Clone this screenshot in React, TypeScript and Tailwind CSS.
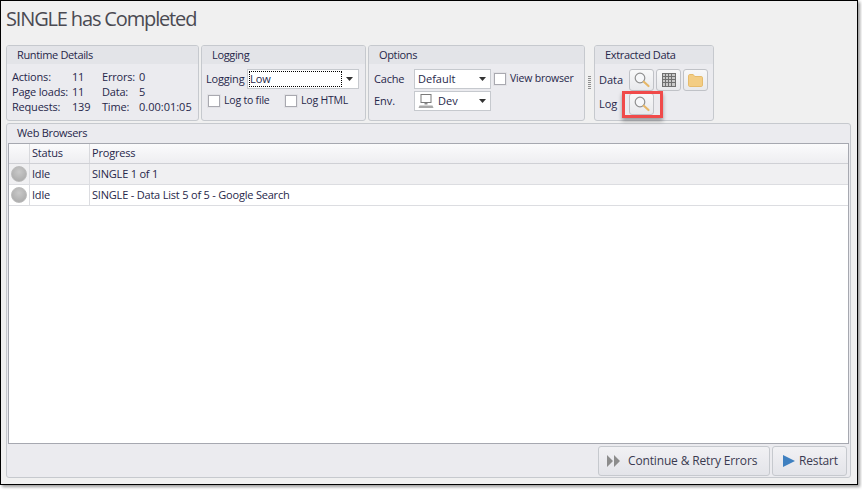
import React from 'react';

const Magnifier = () => (
  <svg width="18" height="18" viewBox="0 0 18 18" fill="none">
    <circle cx="7" cy="7" r="4.8" stroke="#909090" strokeWidth="1.2" fill="#f6f7f9" />
    <path d="M10.800 10.800l4.700 4.200" stroke="#e6b768" strokeWidth="2.200" strokeLinecap="round" />
  </svg>
);

const GridIcon = () => (
  <svg width="14" height="14" viewBox="0 0 14 14" fill="none" stroke="#6f6f6f" strokeWidth="1">
    <rect x="0.500" y="0.500" width="13" height="13" fill="#c9c9c9" />
    <path d="M0.500 3.500h13M0.500 6.500h13M0.500 9.500h13M3.500 0.500v13M6.500 0.500v13M9.500 0.500v13" />
  </svg>
);

const FolderIcon = () => (
  <svg width="15" height="13" viewBox="0 0 15 13">
    <path d="M.5 2C.5 1 1 .5 1.800 .5h3.400l1.500 2h6.500c.8 0 1.300.5 1.300 1.200v7.600c0 .7-.5 1.200-1.300 1.200H1.700C1 12.500 .5 12 .5 11.300z" fill="#f3cd84" stroke="#e6bb6c" />
  </svg>
);

const Monitor = () => (
  <svg width="16" height="16" viewBox="0 0 16 16" fill="none">
    <rect x="3" y="1.500" width="10" height="8" fill="#fff" stroke="#7a7a7a" />
    <path d="M6.500 10h3v1.500h-3z" fill="#8a8a8a" />
    <path d="M1.500 12.500h13l1 2.500H.5z" fill="#a8a8a8" />
  </svg>
);

const Caret = () => (
  <svg width="7" height="4" viewBox="0 0 7 4" className="shrink-0">
    <path d="M0 0h7L3.500 4z" fill="#333" />
  </svg>
);

const Check = ({ label, className }: { label: string; className?: string }) => (
  <div className={`flex items-center gap-[4px] ${className ?? ''}`}>
    <span className="w-[12px] h-[12px] bg-white border border-[#a9a9b0] shadow-[0_0_0_1px_#e2e2e6] box-border" />
    <span className="text-[10.500px] tracking-[-0.2px]">{label}</span>
  </div>
);

const Panel = ({ title, className, children }: { title: string; className: string; children: React.ReactNode }) => (
  <div className={`h-[76px] shrink-0 border border-[#c6c9ce] rounded-[3px] bg-[#ebebef] overflow-hidden ${className}`}>
    <div className="h-[18px] pl-[10px] bg-[#e3e4e8] text-[11px] tracking-[-0.35px] leading-[18px] text-[#27274a]">{title}</div>
    {children}
  </div>
);

const SmallButton = ({ children }: { children: React.ReactNode }) => (
  <div className="w-[25px] h-[22px] border border-[#c0c2c7] rounded-[3px] bg-gradient-to-b from-[#f8f8f9] to-[#e8e9ec] flex items-center justify-center">
    {children}
  </div>
);

const Dot = () => (
  <span className="w-[16px] h-[16px] rounded-full bg-[radial-gradient(circle_at_50%_35%,#c9c9c9,#a6a6a6)] border border-[#bcbcbc]" />
);

const Row = ({ text, className }: { text: string; className: string }) => (
  <div className={`grid grid-cols-[21px_60px_1fr] h-[21px] border-b border-[#dcdde1] leading-[20px] tracking-[-0.2px] ${className}`}>
    <div className="flex items-center justify-center border-r border-[#dcdde1]"><Dot /></div>
    <div className="pl-[2px] border-r border-[#dcdde1]">Idle</div>
    <div className="pl-[2px]">{text}</div>
  </div>
);

export default function App() {
  return (
    <div className="w-[862px] h-[490px] bg-white overflow-hidden font-['Open_Sans','Noto_Sans',sans-serif] text-[11px] text-[#27274a]">
      <div className="relative w-[858px] h-[485px] box-border border border-black bg-[#f0f0f0] shadow-[2px_2px_3px_rgba(0,0,0,0.4)] pl-[5px] pr-[6px] flex flex-col">
        <div className="h-[44px] shrink-0 pt-[3px] text-[20px] leading-[30px] tracking-[-1.15px] text-[#4a4a52]">
          SINGLE has Completed
        </div>

        <div className="flex h-[76px] shrink-0">
          <Panel title="Runtime Details" className="w-[193px]">
            <div className="grid grid-cols-[60px_30px_36px_1fr] pl-[5px] pt-[5px] leading-[15px] tracking-[-0.2px]">
              <span>Actions:</span><span>11</span><span>Errors:</span><span className="pl-[1px]">0</span>
              <span>Page loads:</span><span>11</span><span>Data:</span><span className="pl-[1px]">5</span>
              <span>Requests:</span><span>139</span><span>Time:</span><span className="pl-[1px] tracking-[0px]">0.00:01:05</span>
            </div>
          </Panel>

          <Panel title="Logging" className="w-[165px] ml-[2px]">
            <div className="flex items-center pl-[4px] pt-[5px]">
              <span className="w-[41px] tracking-[-0.2px]">Logging</span>
              <div className="w-[112px] h-[20px] bg-white border border-[#c6c9ce] flex items-center pr-[4px]">
                <span className="w-[93px] h-[16px] ml-[1px] mr-[4px] border border-dotted border-black leading-[14px]">Low</span>
                <Caret />
              </div>
            </div>
            <div className="flex pl-[6px] pt-[4px]">
              <Check label="Log to file" className="w-[77px]" />
              <Check label="Log HTML" />
            </div>
          </Panel>

          <Panel title="Options" className="w-[217px] ml-[2px]">
            <div className="flex items-center pl-[5px] pt-[5px]">
              <span className="w-[40px] tracking-[-0.2px]">Cache</span>
              <div className="w-[77px] h-[20px] bg-white border border-[#c6c9ce] flex items-center justify-between pl-[3px] pr-[4px]">
                <span>Default</span><Caret />
              </div>
              <Check label="View browser" className="ml-[3px]" />
            </div>
            <div className="flex items-center pl-[5px] pt-[2px]">
              <span className="w-[40px]">Env.</span>
              <div className="w-[77px] h-[20px] bg-white border border-[#c6c9ce] flex items-center pl-[3px] pr-[4px]">
                <Monitor /><span className="ml-[4px] flex-1">Dev</span><Caret />
              </div>
            </div>
          </Panel>

          <div className="w-[9px] shrink-0 flex justify-center items-center">
            <span className="w-[3px] h-[14px] bg-[repeating-linear-gradient(to_bottom,#8f8f8f_0,#8f8f8f_1px,transparent_1px,transparent_2px)]" />
          </div>

          <Panel title="Extracted Data" className="w-[120px]">
            <div className="flex items-center pl-[4px] pt-[5px] gap-[2px]">
              <span className="w-[28px]">Data</span>
              <SmallButton><Magnifier /></SmallButton>
              <SmallButton><GridIcon /></SmallButton>
              <SmallButton><FolderIcon /></SmallButton>
            </div>
            <div className="flex items-center pl-[4px] pt-[2px] gap-[2px]">
              <span className="w-[28px]">Log</span>
              <SmallButton><Magnifier /></SmallButton>
            </div>
          </Panel>
        </div>

        <div className="mt-[2px] h-[355px] shrink-0 border border-[#c6c9ce] rounded-[3px] bg-[#ebebef] flex flex-col">
          <div className="h-[19px] shrink-0 pl-[10px] text-[11px] tracking-[-0.3px] leading-[18px]">Web Browsers</div>
          <div className="mx-[1px] h-[301px] shrink-0 border border-[#a6a8b0] bg-white">
            <div className="grid grid-cols-[21px_60px_1fr] h-[20px] border-b border-[#cfd0d5] bg-gradient-to-b from-[#fbfbfc] to-[#eeeef1] leading-[18px] tracking-[-0.2px]">
              <div className="border-r border-[#d8d9dd]" />
              <div className="pl-[2px] border-r border-[#d8d9dd]">Status</div>
              <div className="pl-[2px]">Progress</div>
            </div>
            <Row text="SINGLE 1 of 1" className="bg-[#f0f0f2]" />
            <Row text="SINGLE - Data List 5 of 5 - Google Search" className="bg-white" />
          </div>
          <div className="flex justify-end gap-[2px] pt-[2px] pr-[3px]">
            <div className="w-[172px] h-[30px] border border-[#c6c9ce] rounded-[3px] bg-gradient-to-b from-[#f1f1f4] to-[#e3e4e9] flex items-center pl-[8px] gap-[7px] text-[12px] tracking-[-0.15px] text-[#3a3a50]">
              <svg width="14" height="12" viewBox="0 0 14 12"><path d="M0 0l6 6-6 6zM7 0l6 6-6 6z" fill="#8c8c8c" /></svg>
              <span>Continue &amp; Retry Errors</span>
            </div>
            <div className="w-[75px] h-[30px] border border-[#c6c9ce] rounded-[3px] bg-gradient-to-b from-[#f1f1f4] to-[#e3e4e9] flex items-center pl-[10px] gap-[4px] text-[12px] tracking-[-0.15px] text-[#3a3a50]">
              <svg width="12" height="12" viewBox="0 0 12 12"><path d="M0 0l12 6-12 6z" fill="#3f80c0" /></svg>
              <span>Restart</span>
            </div>
          </div>
        </div>

        {/* red callout round the log button */}
        <div className="absolute left-[621px] top-[90px] w-[41px] h-[27px] border-[3px] border-[#f04a4a] shadow-[0_3px_4px_rgba(0,0,0,0.35)]" />
      </div>
    </div>
  );
}
